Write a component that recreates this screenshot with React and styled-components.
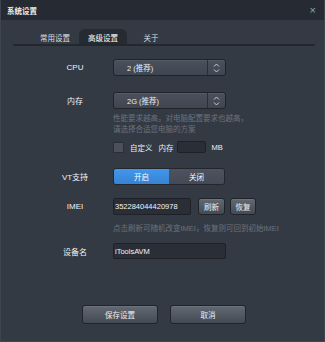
import styled, { createGlobalStyle } from 'styled-components'

const Global = createGlobalStyle`
  html, body { margin: 0; padding: 0; background: #333a44; }
  body {
    font-family: "Liberation Sans", "Noto Sans CJK SC", sans-serif;
    font-size: 7.5px;
    color: #e4e6e9;
  }
`;

const Dialog = styled.div`
  width: 325px;
  height: 342px;
  box-sizing: border-box;
  background: #333a44;
  border: 1px solid #3e4550;
  border-top: none;
  display: flex;
  flex-direction: column;
`;

const TitleBar = styled.div`
  height: 20px;
  flex-shrink: 0;
  background: #262b33;
  display: flex;
  align-items: center;
  justify-content: space-between;
  padding: 0 8px 0 6px;
  font-weight: bold;
  font-size: 7.5px;
  color: #f0f0f0;
`;

const Close = styled.span`
  font-size: 11px;
  font-weight: normal;
  color: #9aa0a8;
`;

const Tabs = styled.div`
  margin: 9px 9px 0 12px;
  height: 15px;
  border-bottom: 2px solid #23282f;
  display: flex;
  padding-left: 18px;
`;

const Tab = styled.div`
  width: 48px;
  display: flex;
  align-items: center;
  justify-content: center;
  padding-top: 2px;
  font-size: 7.5px;
  border-radius: 6px 6px 0 0;
  color: ${p => (p.$active ? '#ffffff' : '#dcdfe3')};
  background: ${p => (p.$active ? '#262b33' : 'transparent')};
`;

const Form = styled.div`
  padding-top: 13px;
  display: flex;
  flex-direction: column;
`;

const Row = styled.div`
  display: grid;
  grid-template-columns: 112px 1fr;
  align-items: center;
  margin-top: ${p => p.$mt || 0}px;
`;

const Label = styled.div`
  text-align: center;
  padding-left: 36px;
  font-size: 8px;
  color: #f0f2f4;
`;

const Select = styled.div`
  width: 113px;
  height: 17px;
  box-sizing: border-box;
  border: 1px solid #20242a;
  border-radius: 3px;
  background: linear-gradient(#4a515c, #3f4651);
  display: flex;
  box-shadow: inset 0 1px 0 rgba(255,255,255,0.06);
`;

const SelectValue = styled.div`
  flex: 1;
  padding-left: 13px;
  display: flex;
  align-items: center;
  font-size: 7.5px;
  color: #eceef0;
`;

const SelectArrow = styled.div`
  width: 17px;
  border-left: 1px solid #2a2f36;
  display: flex;
  align-items: center;
  justify-content: center;
`;

const Hint = styled.div`
  color: #6b727c;
  font-size: 7.5px;
  line-height: 11px;
`;

const Inline = styled.div`
  display: flex;
  align-items: center;
`;

const Check = styled.div`
  width: 11px;
  height: 11px;
  box-sizing: border-box;
  background: #4a515b;
  border: 1px solid #2a2f36;
  margin-right: 6px;
`;

const Small = styled.span`
  margin: 0 ${p => p.$mr || 0}px 0 ${p => p.$ml || 0}px;
  font-size: 7.5px;
  color: #eef0f2;
`;

const Input = styled.div`
  width: ${p => p.$w}px;
  height: ${p => p.$h || 16}px;
  box-sizing: border-box;
  background: #2a2f37;
  border: 1px solid #1e2228;
  border-radius: 2px;
  display: flex;
  align-items: center;
  padding-left: 1px;
  font-size: 7.5px;
  color: #f2f4f6;
`;

const Toggle = styled.div`
  width: 112px;
  height: 17px;
  display: flex;
  border: 1px solid #23272d;
  border-radius: 3px;
  overflow: hidden;
  box-sizing: border-box;
`;

const ToggleOpt = styled.div`
  flex: 1;
  display: flex;
  align-items: center;
  justify-content: center;
  font-size: 7.5px;
  color: #fff;
  background: ${p => (p.$on ? 'linear-gradient(#4297ec, #3683d4)' : 'linear-gradient(#4d545f, #434a55)')};
`;

const Btn = styled.div`
  width: ${p => p.$w}px;
  height: ${p => p.$h}px;
  box-sizing: border-box;
  border: 1px solid #20242a;
  border-radius: 3px;
  background: linear-gradient(#626973, #434a53);
  display: flex;
  align-items: center;
  justify-content: center;
  font-size: 7.5px;
  color: #eceef0;
  box-shadow: inset 0 1px 0 rgba(255,255,255,0.08);
  margin-left: ${p => p.$ml || 0}px;
`;

const Footer = styled.div`
  margin-top: 46px;
  display: flex;
  padding-left: 81px;
  gap: 12px;
`;

const Arrows = () => (
  <svg width="7" height="10" viewBox="0 0 7 10">
    <path d="M1 3.5 L3.5 1 L6 3.5 M1 6.5 L3.5 9 L6 6.5" fill="none" stroke="#c9cdd2" strokeWidth="1" />
  </svg>
);

const App = () => {
  return (
    <>
      <Global />
      <Dialog>
        <TitleBar>
          <span>系统设置</span>
          <Close>×</Close>
        </TitleBar>
        <Tabs>
          <Tab>常用设置</Tab>
          <Tab $active>高级设置</Tab>
          <Tab>关于</Tab>
        </Tabs>
        <Form>
          <Row>
            <Label>CPU</Label>
            <Select>
              <SelectValue>2 (推荐)</SelectValue>
              <SelectArrow><Arrows /></SelectArrow>
            </Select>
          </Row>
          <Row $mt={16}>
            <Label>内存</Label>
            <Select>
              <SelectValue>2G (推荐)</SelectValue>
              <SelectArrow><Arrows /></SelectArrow>
            </Select>
          </Row>
          <Row $mt={4}>
            <span />
            <Hint>性能要求越高，对电脑配置要求也越高，<br />请选择合适您电脑的方案</Hint>
          </Row>
          <Row $mt={6}>
            <span />
            <Inline>
              <Check />
              <Small $mr={6}>自定义</Small>
              <Small $mr={3}>内存</Small>
              <Input $w={29} $h={12} />
              <Small $ml={6}>MB</Small>
            </Inline>
          </Row>
          <Row $mt={15}>
            <Label>VT支持</Label>
            <Toggle>
              <ToggleOpt $on>开启</ToggleOpt>
              <ToggleOpt>关闭</ToggleOpt>
            </Toggle>
          </Row>
          <Row $mt={13}>
            <Label>IMEI</Label>
            <Inline>
              <Input $w={78} $h={17}>352284044420978</Input>
              <Btn $w={27} $h={17} $ml={7}>刷新</Btn>
              <Btn $w={26} $h={17} $ml={5}>恢复</Btn>
            </Inline>
          </Row>
          <Row $mt={8}>
            <span />
            <Hint>点击刷新可随机改变IMEI，恢复则可回到初始IMEI</Hint>
          </Row>
          <Row $mt={9}>
            <Label>设备名</Label>
            <Input $w={113} $h={16}>iToolsAVM</Input>
          </Row>
        </Form>
        <Footer>
          <Btn $w={76} $h={19}>保存设置</Btn>
          <Btn $w={76} $h={19}>取消</Btn>
        </Footer>
      </Dialog>
    </>
  )
};

export default App;
